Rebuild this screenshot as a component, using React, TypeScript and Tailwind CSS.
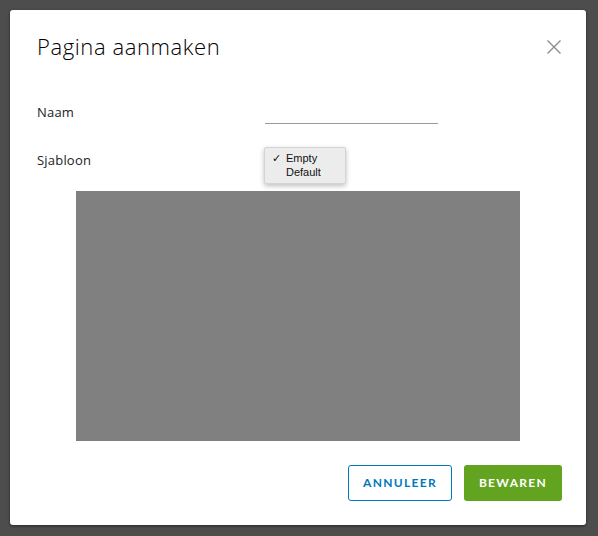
import React from "react";

export default function App() {
  return (
    <div className="w-[598px] h-[536px] bg-[#4d4d4d] p-[10px] pr-[12px] pb-[11px]" style={{ fontFamily: "'Open Sans', 'Noto Sans', sans-serif" }}>
      <div className="relative w-full h-full bg-white rounded-[3px] shadow-[0_1px_3px_rgba(0,0,0,0.5)] flex flex-col px-[27px] pt-[23px]">
        <div className="flex items-start justify-between">
          <h1 className="text-[22px] leading-[26px] font-light text-[#000] tracking-[0.6px]">Pagina aanmaken</h1>
          <button className="mt-[6px] mr-[-3px] w-[16px] h-[16px] text-[#8c8c8c]">
            <svg width="16" height="16" viewBox="0 0 16 16" stroke="currentColor" strokeWidth="1.4" fill="none">
              <path d="M1.5 1.5 L14.5 14.5 M14.5 1.5 L1.5 14.5" />
            </svg>
          </button>
        </div>
        <div className="mt-[41px] flex items-start h-[30px]">
          <div className="w-[228px] text-[13px] leading-[18px] text-[#222] pt-[3px] tracking-[0.2px]">Naam</div>
          <div className="w-[173px] h-[20px] border-b border-[#9a9a9a] mt-[4px]" />
        </div>
        <div className="mt-[14px] relative h-[47px]">
          <div className="text-[13px] leading-[18px] text-[#222] pt-[7px] tracking-[0.2px]">Sjabloon</div>
          <div className="absolute left-[227px] top-[3px] w-[82px] h-[37px] bg-[#ececec] border border-[#d4d4d4] shadow-[0_2px_5px_rgba(0,0,0,0.25)] rounded-[2px] text-[11px] leading-[14px] text-[#111] pt-[3px]" style={{ fontFamily: "'Liberation Sans', Arial, sans-serif" }}>
            <div className="flex"><span className="w-[21px] pl-[7px]">✓</span><span>Empty</span></div>
            <div className="flex"><span className="w-[21px]" /><span>Default</span></div>
          </div>
        </div>
        <div className="ml-[39px] w-[444px] h-[250px] bg-[#808080]" />
        <div className="flex justify-end gap-[12px] mt-[24px] mr-[-3px]" style={{ fontFamily: "Lato, sans-serif" }}>
          <button className="w-[104px] h-[36px] border border-[#0079b8] rounded-[3px] text-[#0079b8] text-[12px] font-bold tracking-[1.3px]">ANNULEER</button>
          <button className="w-[98px] h-[36px] bg-[#62a420] rounded-[3px] text-white text-[12px] font-bold tracking-[1.3px]">BEWAREN</button>
        </div>
      </div>
    </div>
  );
}
